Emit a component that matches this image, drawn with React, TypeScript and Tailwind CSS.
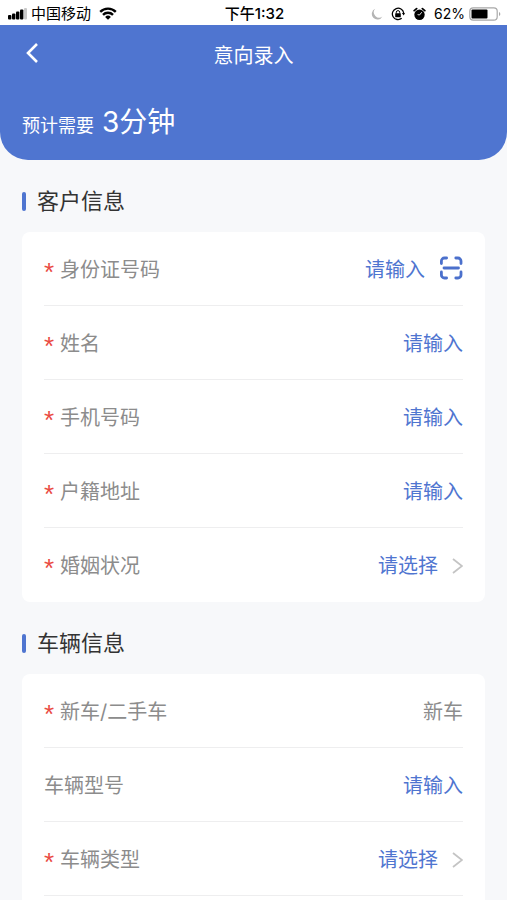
import type { ReactNode } from "react";

type Field = {
  id: string;
  label: string;
  required?: boolean;
  kind: "input" | "scan" | "select" | "fixed";
  value?: string;
};

const customerFields: Field[] = [
  { id: "idNumber", label: "身份证号码", required: true, kind: "scan" },
  { id: "name", label: "姓名", required: true, kind: "input" },
  { id: "phone", label: "手机号码", required: true, kind: "input" },
  { id: "address", label: "户籍地址", required: true, kind: "input" },
  { id: "marriage", label: "婚姻状况", required: true, kind: "select" },
];

const vehicleFields: Field[] = [
  { id: "condition", label: "新车/二手车", required: true, kind: "fixed", value: "新车" },
  { id: "model", label: "车辆型号", kind: "input" },
  { id: "type", label: "车辆类型", required: true, kind: "select" },
];

const StatusBar = () => (
  <div className="grid h-[25px] grid-cols-3 items-center bg-white pt-0.5 pr-1.5 pl-2 text-black">
    <div className="flex items-center gap-1">
      {/* Signal */}
      <svg width="19" height="12" viewBox="0 0 19 12">
        <rect x="0" y="7" width="3.4" height="4.5" rx="1" />
        <rect x="4" y="5.5" width="3.4" height="6" rx="1" />
        <rect x="8" y="3.5" width="3.4" height="8" rx="1" />
        <rect x="12" y="1.5" width="3.4" height="10" rx="1" />
        <rect x="16" y="0" width="3" height="11.5" rx="1" fill="#c8c8c8" />
      </svg>
      <span className="text-[15px] leading-5 whitespace-nowrap">中国移动</span>
      {/* Wifi */}
      <svg className="ml-1" width="18" height="13" viewBox="0 0 18 13" fill="none" stroke="black" strokeWidth="2.4">
        <path d="M1.2 4.9a11 11 0 0 1 15.6 0" />
        <path d="M4 7.9a7 7 0 0 1 10 0" />
        <path d="M9 12.8 6.1 9.9a4.2 4.2 0 0 1 5.8 0Z" fill="black" stroke="none" />
      </svg>
    </div>
    <div className="text-center text-[15px] leading-5 font-medium whitespace-nowrap">下午1:32</div>
    <div className="flex items-center justify-end gap-2">
      {/* Do not disturb */}
      <svg width="12" height="12" viewBox="0 0 12 12" fill="#b5b5b5">
        <path d="M4.2.8A5.6 5.6 0 1 0 11.4 8.5 5.3 5.3 0 0 1 4.2.8Z" />
      </svg>
      {/* Rotation lock */}
      <svg width="14" height="14" viewBox="0 0 14 14" fill="none" stroke="black" strokeWidth="1.3">
        <path d="M10.7 11.3A5.7 5.7 0 1 1 12.7 6" />
        <path d="m10.9 6 1.8 2.5L14 6Z" fill="black" stroke="none" />
        <rect x="4.2" y="6.2" width="5.6" height="4.1" rx=".5" fill="black" stroke="none" />
        <path d="M5.3 6.5V5.3a1.7 1.7 0 0 1 3.4 0v1.2" strokeWidth="1" />
      </svg>
      {/* Alarm */}
      <svg width="13" height="14" viewBox="0 0 13 14">
        <circle cx="6.5" cy="7.8" r="5.2" />
        <path d="M1.2 3.6 3.6 1.6M11.8 3.6 9.4 1.6" stroke="black" strokeWidth="1.8" strokeLinecap="round" />
        <path d="M8.8 5.2 6.5 8 4.6 7.6" stroke="white" strokeWidth=".9" fill="none" />
      </svg>
      <div className="flex items-center gap-1">
        <span className="text-[14px] leading-5">62%</span>
        <svg width="32" height="14" viewBox="0 0 32 14">
          <rect x=".8" y=".8" width="27.4" height="12.4" rx="3.4" fill="none" stroke="#a8a8a8" strokeWidth="1.2" />
          <rect x="2.5" y="2.5" width="16" height="9" rx="1" />
          <path d="M30 5v4c1.8-.6 1.8-3.4 0-4Z" fill="#a8a8a8" />
        </svg>
      </div>
    </div>
  </div>
);

const ScanIcon = () => (
  <svg width="24" height="24" viewBox="0 0 24 24" fill="none" stroke="#4b70cc" strokeWidth="2.8" strokeLinecap="round">
    <path d="M2.4 7.6V5a3 3 0 0 1 3-3h2.2M16.8 2H19a3 3 0 0 1 3 3v2.6M22 16v3a3 3 0 0 1-3 3h-2.2M7.6 22H5.4a3 3 0 0 1-3-3v-3M5 12h14.5" />
  </svg>
);

const Row = ({ field }: { field: Field }) => {
  const { id, label, required, kind, value } = field;
  return (
    <div className="flex h-[74px] items-center border-b border-[#eeeeef] pt-0.5 text-[20px] leading-7">
      <label htmlFor={id} className="flex shrink-0 items-center text-[#8c8c8c]">
        {required && (
          <span className="w-4 pt-1 font-['Liberation_Sans'] text-[26px] leading-7 text-[#ea4b43]">*</span>
        )}
        {label}
      </label>
      {kind === "select" ? (
        <>
          <select
            id={id}
            defaultValue=""
            className="ml-auto appearance-none bg-transparent text-right text-[#4f75d0] outline-none"
          >
            <option value="">请选择</option>
          </select>
          <svg className="ml-3.5" width="11" height="16" viewBox="0 0 11 16" fill="none" stroke="#c4c4c4" strokeWidth="1.8">
            <path d="m1 1 9 7-9 7" />
          </svg>
        </>
      ) : (
        <input
          id={id}
          type="text"
          placeholder="请输入"
          defaultValue={value}
          readOnly={kind === "fixed"}
          className="w-0 min-w-0 flex-1 bg-transparent text-right text-[#8c8c8c] outline-none placeholder:text-[#4f75d0] placeholder:opacity-100"
        />
      )}
      {kind === "scan" && (
        <button type="button" aria-label="扫描" className="ml-3.5 pb-1">
          <ScanIcon />
        </button>
      )}
    </div>
  );
};

const Section = ({ title, children }: { title: string; children: ReactNode }) => (
  <section className="px-[22px]">
    <h2 className="flex h-[72px] items-center gap-[11px] pt-2.5 text-[22px] leading-8 text-[#333333]">
      <span className="h-[19px] w-1 rounded-sm bg-[#4f75d0]" />
      {title}
    </h2>
    {children}
  </section>
);

const App = () => {
  return (
    <div className="min-h-screen bg-[#f7f8fa] font-[Inter,'Noto_Sans_CJK_SC',sans-serif]">
      <StatusBar />

      {/* Header */}
      <header className="rounded-b-[28px] bg-[#4f75d0] px-[22px] pb-[18px] text-white">
        <div className="grid h-[62px] grid-cols-[24px_1fr_24px] items-center">
          <button type="button" aria-label="返回" className="pb-1.5 pl-1">
            <svg width="12" height="20" viewBox="0 0 12 20" fill="none" stroke="white" strokeWidth="2.6">
              <path d="m11 1-9 9 9 9" />
            </svg>
          </button>
          <h1 className="text-center text-[20px] leading-7">意向录入</h1>
        </div>
        <p className="flex items-baseline gap-2 pt-[15px]">
          <span className="text-[18px]">预计需要</span>
          <span className="text-[28px] leading-10">3分钟</span>
        </p>
      </header>

      <Section title="客户信息">
        <div className="rounded-lg bg-white px-[22px] *:last:border-transparent">
          {customerFields.map((field) => (
            <Row key={field.id} field={field} />
          ))}
        </div>
      </Section>
      <Section title="车辆信息">
        <div className="rounded-lg bg-white px-[22px] pb-6">
          {vehicleFields.map((field) => (
            <Row key={field.id} field={field} />
          ))}
        </div>
      </Section>
    </div>
  );
};

export default App;
